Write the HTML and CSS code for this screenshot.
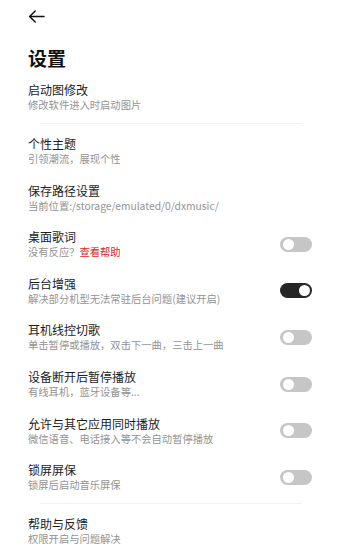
FILE: index.html
```html
<!DOCTYPE html>
<html lang="zh">
<head>
<meta charset="utf-8">
<link rel="stylesheet" href="styles.css">
</head>
<body>
<div class="page">
  <header class="topbar">
    <svg class="back" width="17" height="13" viewBox="0 0 17 13"><path d="M16 6.5H1.6M7.2 1L1.6 6.5L7.2 12" fill="none" stroke="#111" stroke-width="1.5" stroke-linecap="round" stroke-linejoin="round"/></svg>
  </header>
  <h1 class="title">设置</h1>
  <div class="list">
    <div class="item"><div class="text"><div class="t">启动图修改</div><div class="s">修改软件进入时启动图片</div></div></div>
    <div class="divider"></div>
    <div class="item"><div class="text"><div class="t">个性主题</div><div class="s">引领潮流，展现个性</div></div></div>
    <div class="item"><div class="text"><div class="t">保存路径设置</div><div class="s">当前位置:/storage/emulated/0/dxmusic/</div></div></div>
    <div class="item"><div class="text"><div class="t">桌面歌词</div><div class="s">没有反应？<span class="red">查看帮助</span></div></div><div class="toggle"><span class="knob"></span></div></div>
    <div class="item"><div class="text"><div class="t">后台增强</div><div class="s">解决部分机型无法常驻后台问题(建议开启)</div></div><div class="toggle on"><span class="knob"></span></div></div>
    <div class="item"><div class="text"><div class="t">耳机线控切歌</div><div class="s">单击暂停或播放，双击下一曲，三击上一曲</div></div><div class="toggle"><span class="knob"></span></div></div>
    <div class="item"><div class="text"><div class="t">设备断开后暂停播放</div><div class="s">有线耳机，蓝牙设备等...</div></div><div class="toggle"><span class="knob"></span></div></div>
    <div class="item"><div class="text"><div class="t">允许与其它应用同时播放</div><div class="s">微信语音、电话接入等不会自动暂停播放</div></div><div class="toggle"><span class="knob"></span></div></div>
    <div class="item"><div class="text"><div class="t">锁屏屏保</div><div class="s">锁屏后启动音乐屏保</div></div><div class="toggle"><span class="knob"></span></div></div>
    <div class="divider"></div>
    <div class="item"><div class="text"><div class="t">帮助与反馈</div><div class="s">权限开启与问题解决</div></div></div>
  </div>
</div>
</body>
</html>
```
FILE: styles.css
```css
html, body {
  margin: 0;
  padding: 0;
  background: #fff;
}
body {
  font-family: "Noto Sans CJK SC", "Noto Sans", sans-serif;
  color: #1c1c1c;
  overflow: hidden;
}
.page {
  width: 345px;
  height: 548px;
  padding: 0 33px 0 28px;
  box-sizing: border-box;
}
.topbar {
  height: 32px;
  display: flex;
  align-items: center;
}
.back {
  display: block;
}
.title {
  margin: 12.5px 0 0;
  font-size: 19px;
  line-height: 26px;
  font-weight: 700;
  color: #111;
}
.list {
  margin-top: 3.7px;
  display: flex;
  flex-direction: column;
}
.item {
  display: flex;
  align-items: center;
  justify-content: space-between;
  padding: 8.3px 0;
}
.t {
  font-size: 12px;
  line-height: 16px;
  color: #1c1c1c;
}
.s {
  font-size: 10.3px;
  line-height: 14px;
  color: #939393;
  white-space: nowrap;
}
.red {
  color: #e02424;
}
.divider {
  height: 1px;
  background: #f1f1f1;
  margin: 2.5px 10px 3.5px 12px;
}
.toggle {
  width: 32px;
  height: 15px;
  border-radius: 8px;
  background: #c6c6c6;
  display: flex;
  align-items: center;
  padding: 0 2.5px;
  box-sizing: border-box;
  flex-shrink: 0;
}
.toggle .knob {
  width: 11px;
  height: 11px;
  border-radius: 50%;
  background: #fff;
}
.toggle.on {
  background: #262626;
  justify-content: flex-end;
}
```
